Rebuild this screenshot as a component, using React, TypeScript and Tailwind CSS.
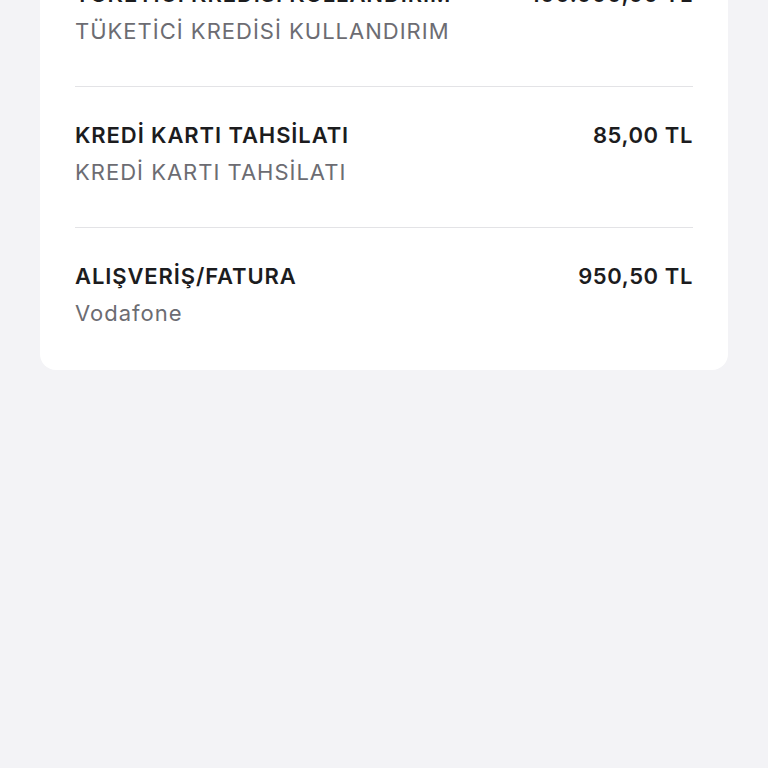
import React from "react";

const rows = [
  { title: "TÜKETİCİ KREDİSİ KULLANDIRIM", sub: "TÜKETİCİ KREDİSİ KULLANDIRIM", amount: "100.000,00 TL" },
  { title: "KREDİ KARTI TAHSİLATI", sub: "KREDİ KARTI TAHSİLATI", amount: "85,00 TL" },
  { title: "ALIŞVERİŞ/FATURA", sub: "Vodafone", amount: "950,50 TL" },
];

export default function App() {
  return (
    <div className="min-h-[768px] w-full bg-[#f3f3f6] px-[40px] overflow-hidden" style={{ fontFamily: "Inter, 'Noto Sans', sans-serif" }}>
      <div className="-mt-[54px] rounded-[16px] bg-white px-[35px]">
        {rows.map((r, i) => (
          <div
            key={i}
            className={
              i < rows.length - 1
                ? "border-b border-[#e3e3e6] pt-[34px] pb-[41px]"
                : "pt-[34px] pb-[43px]"
            }
          >
            <div className="flex items-center justify-between">
              <span className="text-[22px] leading-[28px] tracking-[0.9px] font-semibold text-[#1c1c1e]">{r.title}</span>
              <span className="text-[22px] leading-[28px] tracking-[0.6px] font-semibold text-[#1c1c1e]">{r.amount}</span>
            </div>
            <div className="mt-[9px] text-[22px] leading-[28px] tracking-[1px] text-[#6c6c72]">{r.sub}</div>
          </div>
        ))}
      </div>
    </div>
  );
}
